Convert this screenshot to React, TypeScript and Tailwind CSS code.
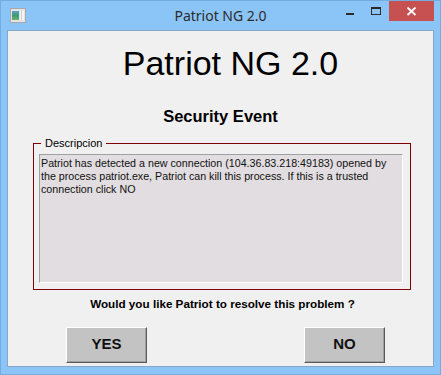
const TitleIcon = () => (
  <svg width="16" height="15" viewBox="0 0 16 15">
    <defs>
      <linearGradient id="tig" x1="0" y1="0" x2="0" y2="1">
        <stop offset="0" stopColor="#5aa0c8" />
        <stop offset="0.5" stopColor="#3f9a78" />
        <stop offset="1" stopColor="#6cb06a" />
      </linearGradient>
    </defs>
    <rect x="0.5" y="0.5" width="15" height="14" fill="#e4e4e4" stroke="#a8a8a8" />
    <rect x="2" y="3" width="7" height="9" fill="url(#tig)" />
    <rect x="10" y="3" width="4" height="9" fill="#f4f6f6" />
    <rect x="11" y="3" width="1" height="9" fill="#c8d0d0" />
  </svg>
);

const MinIcon = () => (
  <svg width="26" height="20" viewBox="0 0 26 20">
    <rect x="9" y="12" width="8" height="2" fill="#2b2b2b" />
  </svg>
);

const MaxIcon = () => (
  <svg width="26" height="20" viewBox="0 0 26 20">
    <rect x="8.5" y="6.5" width="9" height="7" fill="none" stroke="#2b2b2b" />
    <rect x="8" y="6" width="10" height="2" fill="#2b2b2b" />
  </svg>
);

const CloseIcon = () => (
  <svg width="45" height="20" viewBox="0 0 45 20">
    <path d="M18.5 6.5 L26.5 14 M26.5 6.5 L18.5 14" stroke="#ffffff" strokeWidth="1.8" />
  </svg>
);

const WinButton = ({ label }: { label: string }) => (
  <button className="w-[81px] h-[36px] flex items-center justify-center bg-[#c3c3c3] border border-t-white border-l-white border-b-[#5a5a5a] border-r-[#5a5a5a] shadow-[inset_-1px_-1px_0_#a0a0a0] text-[15px] font-bold text-[#111]">
    {label}
  </button>
);

export default function App() {
  return (
    <div className="w-[441px] h-[375px] bg-[#8bc5f8] border border-[#74ace0] flex flex-col font-['Liberation_Sans',Arial,sans-serif]">
      <div className="h-[29px] grid grid-cols-[1fr_auto_1fr] items-start">
        <div className="pl-[9px] pt-[7px]">
          <TitleIcon />
        </div>
        <div className="font-['Noto_Sans',sans-serif] text-[14px] leading-[29px] text-[#2b2b2b]">
          Patriot NG 2.0
        </div>
        <div className="flex justify-end pr-[6px]">
          <MinIcon />
          <MaxIcon />
          <div className="w-[45px] h-[20px] bg-[#c75050]">
            <CloseIcon />
          </div>
        </div>
      </div>

      <div className="mx-[6px] h-[337px] bg-[#f0f0f0] border border-[#88a6c6] flex flex-col">
        <h1 className="mt-[15px] pl-[20px] text-center text-[34px] leading-none text-black">
          Patriot NG 2.0
        </h1>
        <h2 className="mt-[28px] text-center text-[16.5px] leading-none font-bold text-black">
          Security Event
        </h2>

        <fieldset className="mt-[12px] ml-[25px] w-[378px] border border-[#800000] pl-[5px] pr-[7px] pb-[6px]">
          <legend className="ml-[2px] px-[4px] text-[11px] leading-[13px] text-black">Descripcion</legend>
          <div className="mt-[4px] h-[129px] bg-[#e1dde0] border border-t-[#a0a0a0] border-l-[#a0a0a0] border-b-white border-r-white pl-[1px] pt-[2px] text-[10.7px] leading-[13px] text-[#111]">
            Patriot has detected a new connection (104.36.83.218:49183) opened by the process patriot.exe, Patriot can kill this process. If this is a trusted connection click NO
          </div>
        </fieldset>

        <p className="mt-[7px] pl-[4px] text-center text-[11.7px] leading-[14px] font-bold text-black">
          Would you like Patriot to resolve this problem ?
        </p>

        <div className="mt-[16px] flex justify-between pl-[58px] pr-[48px]">
          <WinButton label="YES" />
          <WinButton label="NO" />
        </div>
      </div>
    </div>
  );
}
